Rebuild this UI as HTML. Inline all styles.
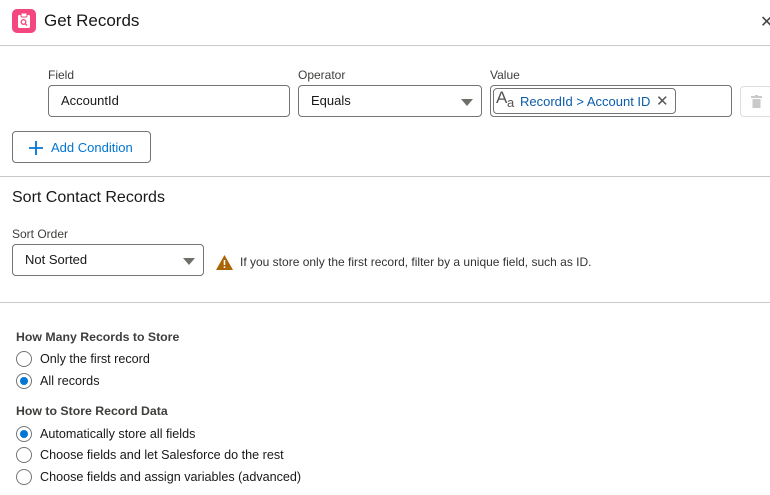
<!DOCTYPE html>
<html><head><style>
body{margin:0;width:770px;height:495px;background:#fff;font-family:"Liberation Sans",sans-serif;color:#181818;position:relative;overflow:hidden;font-size:13px}
.a{position:absolute;white-space:nowrap}
.box{position:absolute;border:1px solid #747474;border-radius:4px;box-sizing:border-box;background:#fff}
.lbl{position:absolute;font-size:12px;color:#3e3e3c}
.caret{position:absolute;width:0;height:0;border-left:6px solid transparent;border-right:6px solid transparent;border-top:7px solid #706e6b}
.radio{position:absolute;width:16px;height:16px;border:1px solid #747474;border-radius:50%;box-sizing:border-box;background:#fff}
.radio.on::after{content:"";position:absolute;left:3px;top:3px;width:8px;height:8px;border-radius:50%;background:#0176d3}
.hr{position:absolute;left:0;width:770px;height:1px;background:#c9c9c9}
.r{font-size:12.6px}
</style></head><body>
<div class="a" style="left:12px;top:9px;width:24px;height:24px;background:#f4477f;border-radius:5px"></div>
<svg class="a" style="left:16px;top:12px" width="16" height="18" viewBox="0 0 16 18"><rect x="2" y="3" width="12" height="13" rx="1.5" fill="#fff"/><rect x="5" y="1" width="6" height="4" rx="1" fill="#fff" stroke="#f4477f" stroke-width="1"/><circle cx="7.5" cy="10" r="2.3" fill="none" stroke="#f4477f" stroke-width="1.3"/><line x1="9.2" y1="11.7" x2="11" y2="13.5" stroke="#f4477f" stroke-width="1.3"/></svg>
<div class="a" style="left:44px;top:11px;font-size:17px">Get Records</div>
<div class="a" style="left:760px;top:12px;font-size:16px;color:#444">✕</div>
<div class="hr" style="top:45px"></div>

<div class="lbl" style="left:48px;top:68px">Field</div>
<div class="box" style="left:48px;top:85px;width:242px;height:32px"></div>
<div class="a" style="left:61px;top:93px">AccountId</div>
<div class="lbl" style="left:298px;top:68px">Operator</div>
<div class="box" style="left:298px;top:85px;width:184px;height:32px"></div>
<div class="a" style="left:311px;top:93px">Equals</div>
<div class="caret" style="left:461px;top:99px"></div>
<div class="lbl" style="left:490px;top:68px">Value</div>
<div class="box" style="left:490px;top:85px;width:242px;height:32px"></div>
<div class="box" style="left:493px;top:88px;width:183px;height:26px"></div>
<div class="a" style="left:496px;top:88px;font-size:17px;color:#555">A</div>
<div class="a" style="left:507px;top:95px;font-size:13px;color:#555">a</div>
<div class="a" style="left:520px;top:94px;color:#0b5cab">RecordId &gt; Account ID</div>
<div class="a" style="left:656px;top:92px;font-size:15px;color:#555">✕</div>
<div class="box" style="left:740px;top:86px;width:40px;height:31px;border-color:#ddd"></div>
<svg class="a" style="left:751px;top:95px" width="11" height="13" viewBox="0 0 11 13"><rect x="0" y="1" width="11" height="2" fill="#c9c9c9"/><rect x="4" y="0" width="3" height="2" fill="#c9c9c9"/><rect x="1.5" y="4" width="8" height="9" fill="#c9c9c9"/></svg>

<div class="box" style="left:12px;top:131px;width:139px;height:32px"></div>
<svg class="a" style="left:29px;top:141px" width="14" height="14" viewBox="0 0 14 14"><path d="M7 0v14M0 7h14" stroke="#0176d3" stroke-width="1.8"/></svg>
<div class="a" style="left:51px;top:140px;color:#0176d3">Add Condition</div>
<div class="hr" style="top:176px"></div>

<div class="a" style="left:12px;top:189px;font-size:16px">Sort Contact Records</div>
<div class="lbl" style="left:12px;top:227px">Sort Order</div>
<div class="box" style="left:12px;top:244px;width:192px;height:32px"></div>
<div class="a" style="left:25px;top:252px">Not Sorted</div>
<div class="caret" style="left:183px;top:258px"></div>
<svg class="a" style="left:216px;top:255px" width="17" height="15" viewBox="0 0 17 15"><path d="M8.5 0L17 15H0z" fill="#a96404"/><rect x="7.7" y="5" width="1.6" height="5" fill="#fff"/><rect x="7.7" y="11.3" width="1.6" height="1.6" fill="#fff"/></svg>
<div class="a" style="left:240px;top:255px;font-size:12px;color:#333">If you store only the first record, filter by a unique field, such as ID.</div>
<div class="hr" style="top:302px"></div>

<div class="a" style="left:16px;top:330px;font-weight:bold;font-size:12.3px;color:#3e3e3c">How Many Records to Store</div>
<div class="radio" style="left:16px;top:351px"></div><div class="a r" style="left:40px;top:352px">Only the first record</div>
<div class="radio on" style="left:16px;top:373px"></div><div class="a r" style="left:40px;top:374px">All records</div>
<div class="a" style="left:16px;top:404px;font-weight:bold;font-size:12.3px;color:#3e3e3c">How to Store Record Data</div>
<div class="radio on" style="left:16px;top:426px"></div><div class="a r" style="left:40px;top:427px">Automatically store all fields</div>
<div class="radio" style="left:16px;top:447px"></div><div class="a r" style="left:40px;top:448px">Choose fields and let Salesforce do the rest</div>
<div class="radio" style="left:16px;top:469px"></div><div class="a r" style="left:40px;top:470px">Choose fields and assign variables (advanced)</div>
</body></html>
